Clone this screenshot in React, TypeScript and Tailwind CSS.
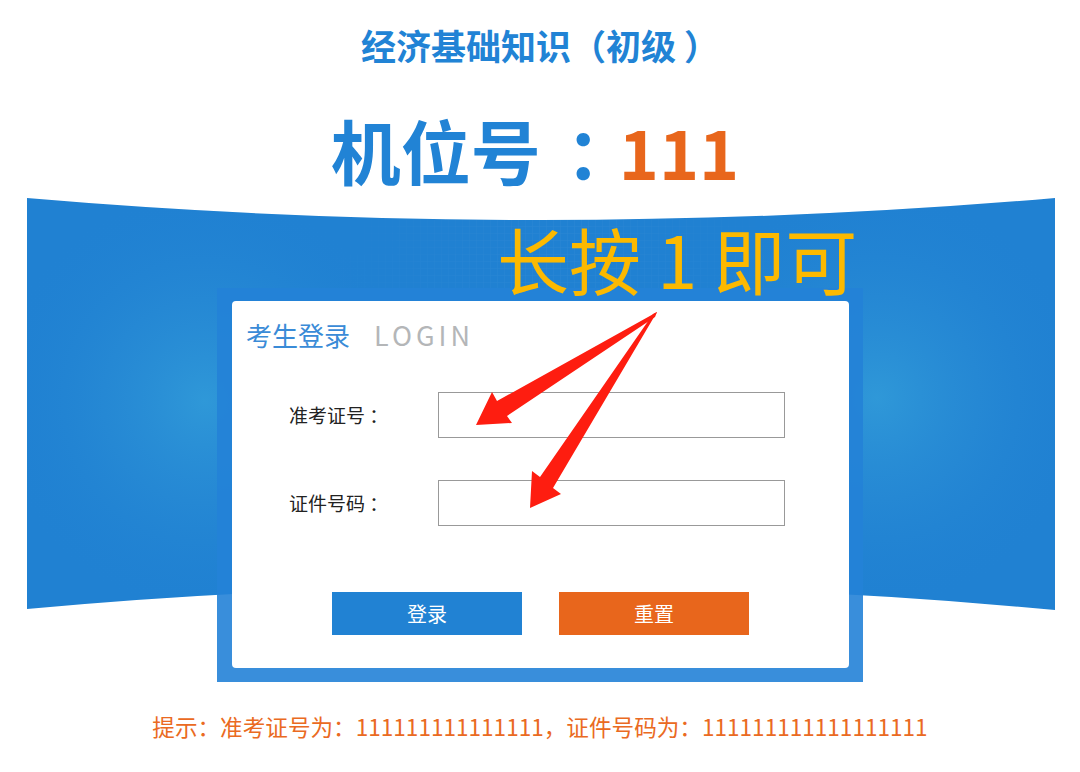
import React from "react";

const Band = () => (
  <svg
    className="absolute left-0 top-0"
    width="1080"
    height="416"
    viewBox="0 0 1080 416"
  >
    <defs>
      <radialGradient id="spotL" cx="205" cy="203" r="210" gradientUnits="userSpaceOnUse">
        <stop offset="0" stopColor="#2f98d8" stopOpacity="1" />
        <stop offset="0.5" stopColor="#288cd5" stopOpacity="0.6" />
        <stop offset="1" stopColor="#2082d3" stopOpacity="0" />
      </radialGradient>
      <radialGradient id="spotR" cx="877" cy="200" r="210" gradientUnits="userSpaceOnUse">
        <stop offset="0" stopColor="#2f98d8" stopOpacity="1" />
        <stop offset="0.5" stopColor="#288cd5" stopOpacity="0.6" />
        <stop offset="1" stopColor="#2082d3" stopOpacity="0" />
      </radialGradient>
      <radialGradient id="gridFade" cx="560" cy="40" r="260" gradientUnits="userSpaceOnUse">
        <stop offset="0" stopColor="#fff" stopOpacity="1" />
        <stop offset="1" stopColor="#fff" stopOpacity="0" />
      </radialGradient>
      <pattern id="grid" width="7" height="7" patternUnits="userSpaceOnUse">
        <path d="M7 0 L0 0 0 7" fill="none" stroke="#ffffff" strokeWidth="1" />
      </pattern>
      <mask id="gridMask">
        <rect x="0" y="0" width="1080" height="416" fill="url(#gridFade)" />
      </mask>
      <clipPath id="bandClip">
        <path d="M27 0 Q541 44 1055 0 L1055 412 Q541 364 27 411 Z" />
      </clipPath>
    </defs>
    <g clipPath="url(#bandClip)">
      <rect x="0" y="0" width="1080" height="416" fill="#2081d2" />
      <rect x="0" y="0" width="1080" height="416" fill="url(#spotL)" />
      <rect x="0" y="0" width="1080" height="416" fill="url(#spotR)" />
      <rect x="0" y="0" width="1080" height="416" fill="url(#grid)" opacity="0.06" mask="url(#gridMask)" />
    </g>
  </svg>
);

const Arrows = () => (
  <svg
    className="absolute left-0 top-0 pointer-events-none"
    width="1080"
    height="772"
    viewBox="0 0 1080 772"
  >
    <polygon
      points="657,312 655,317 507,416 512,423 476,425 492,392 497,401"
      fill="#fe1d10"
    />
    <polygon
      points="657,312 653,314 540,477 532,471 530,508 561,494 553,488"
      fill="#fe1d10"
    />
  </svg>
);

export default function App() {
  return (
    <div className="relative w-[1080px] h-[772px] overflow-hidden bg-white font-['Noto_Sans_CJK_SC','Noto_Sans',sans-serif]">
      <h1 className="mt-[19px] text-center text-[35px] leading-[51px] font-bold text-[#2183d5] whitespace-pre">
        经济基础知识（初级 ）
      </h1>
      <div className="mt-[44px] flex justify-center items-baseline pr-[10px] leading-[72px] font-bold">
        <span className="text-[70px] text-[#2183d5]">机位号</span>
        <span className="ml-[25px] tracking-[-19px] text-[70px] text-[#2183d5]">：</span>
        <span className="ml-[2px] text-[68px] text-[#e8661c]">111</span>
      </div>

      <div className="relative mt-[11px] pt-[90px]">
        <Band />
        <div className="absolute z-10 left-[497px] top-[24px] text-[72px] leading-[72px] font-normal text-[#fcb900] whitespace-pre">
          长按 1 即可
        </div>
        <div className="relative mx-auto w-[646px] bg-[rgba(35,130,215,0.9)] pt-[13px] pb-[14px] pl-[15px] pr-[14px]">
          <div className="h-[367px] rounded-[4px] bg-white pt-[14px]">
            <div className="flex items-baseline pl-[14px] leading-[39px]">
              <span className="text-[26px] text-[#3a8bd7]">考生登录</span>
              <span className="ml-[24px] text-[27px] tracking-[4px] text-[#b4b6b8]">LOGIN</span>
            </div>
            <div className="mt-[38px] flex items-center pl-[57px]">
              <span className="w-[149px] text-[19px] text-[#222]">准考证号 ：</span>
              <div className="w-[347px] h-[46px] border border-[#999]" />
            </div>
            <div className="mt-[42px] flex items-center pl-[57px]">
              <span className="w-[149px] text-[19px] text-[#222]">证件号码 ：</span>
              <div className="w-[347px] h-[46px] border border-[#999]" />
            </div>
            <div className="mt-[66px] flex justify-center gap-[37px]">
              <div className="flex h-[43px] w-[190px] items-center justify-center bg-[#2182d3] text-[20px] text-white">
                登录
              </div>
              <div className="flex h-[43px] w-[190px] items-center justify-center bg-[#e8661c] text-[20px] text-white">
                重置
              </div>
            </div>
          </div>
        </div>
      </div>

      <p className="mt-[28px] text-center text-[22.6px] leading-[33px] text-[#ea6a22]">
        提示：准考证号为：111111111111111，证件号码为：111111111111111111
      </p>

      <Arrows />
    </div>
  );
}
